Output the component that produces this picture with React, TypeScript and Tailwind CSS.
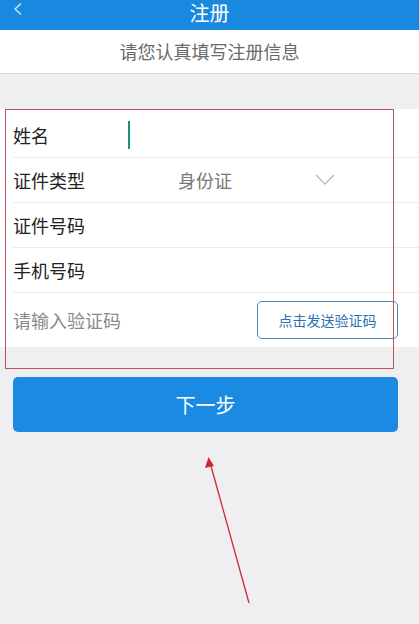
import React from 'react'

const font = { fontFamily: '"Noto Sans CJK SC", "Noto Sans", sans-serif' }

function Row({ label, children, last }: { label: string; children?: React.ReactNode; last?: boolean }) {
  return (
    <div className={`flex items-center h-[45px] ml-[13px] ${last ? '' : 'border-b border-[#ececec]'}`}>
      <span className="w-[115px] text-[18px] text-[#222]">{label}</span>
      {children}
    </div>
  )
}

export default function App() {
  return (
    <div className="relative w-[419px] h-[624px] bg-[#efeef0] overflow-hidden" style={font}>
      {/* Header */}
      <div className="relative h-[30px] bg-[#1989e0] flex items-center justify-center">
        <svg className="absolute left-[13px] top-[3px]" width="10" height="12" viewBox="0 0 10 12">
          <path d="M8 0.5 L2 6 L8 11.5" fill="none" stroke="#cfe6fa" strokeWidth="1.4" />
        </svg>
        <span className="text-white text-[20px] leading-none -mt-[4px]">注册</span>
      </div>

      {/* Subtitle */}
      <div className="h-[44px] bg-white border-b border-[#d9d9d9] flex items-center justify-center">
        <span className="text-[18px] text-[#6a6a6a]">请您认真填写注册信息</span>
      </div>

      {/* Form */}
      <div className="mt-[35px] bg-white">
        <div className="h-[4px]" />
        <Row label="姓名">
          <span className="w-[2px] h-[28px] bg-[#1b8f78]" />
        </Row>
        <Row label="证件类型">
          <span className="ml-[50px] text-[18px] text-[#777]">身份证</span>
          <svg className="ml-[83px]" width="20" height="12" viewBox="0 0 20 12">
            <path d="M1 1 L10 10 L19 1" fill="none" stroke="#b8b8b8" strokeWidth="1.3" />
          </svg>
        </Row>
        <Row label="证件号码" />
        <Row label="手机号码" />
        <div className="flex items-center h-[54px] pl-[13px] pr-[21px]">
          <span className="flex-1 text-[18px] text-[#8a8a8a]">请输入验证码</span>
          <button className="w-[141px] h-[38px] rounded-[5px] border border-[#4a86b4] text-[14px] text-[#2a72b2]">
            点击发送验证码
          </button>
        </div>
      </div>

      {/* Next button */}
      <div className="px-[13px] pr-[21px] mt-[30px]">
        <button className="w-full h-[55px] rounded-[5px] bg-[#1a8ae2] text-white text-[20px]">下一步</button>
      </div>

      {/* Annotation rectangle */}
      <div className="absolute left-[5px] top-[109px] w-[389px] h-[260px] border border-[#c0505c] pointer-events-none" />

      {/* Annotation arrow */}
      <svg className="absolute left-0 top-0 pointer-events-none" width="419" height="624">
        <line x1="249" y1="603" x2="211" y2="466" stroke="#cc2a35" strokeWidth="1.3" />
        <path d="M208.5 457 L205 468 L214 466 Z" fill="#cc2a35" />
      </svg>
    </div>
  )
}
